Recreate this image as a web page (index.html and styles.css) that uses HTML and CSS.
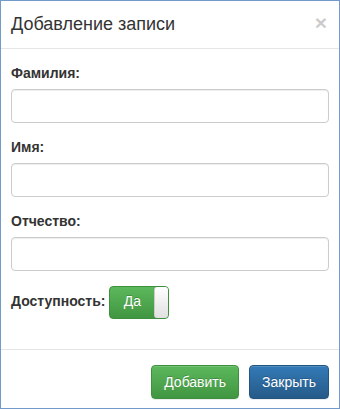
FILE: index.html
```html
<!DOCTYPE html>
<html lang="ru">
<head>
<meta charset="utf-8">
<title>Добавление записи</title>
<link rel="stylesheet" href="styles.css">
</head>
<body>
<div class="modal">
  <div class="modal-header">
    <h4 class="modal-title">Добавление записи</h4>
    <span class="close">×</span>
  </div>
  <div class="modal-body">
    <div class="form-group">
      <label class="label">Фамилия:</label>
      <input class="input" type="text">
    </div>
    <div class="form-group">
      <label class="label">Имя:</label>
      <input class="input" type="text">
    </div>
    <div class="form-group">
      <label class="label">Отчество:</label>
      <input class="input" type="text">
    </div>
    <div class="form-inline">
      <label class="label inline">Доступность:</label>
      <div class="switch">
        <span class="switch-on">Да</span>
        <span class="switch-knob"></span>
      </div>
    </div>
  </div>
  <div class="modal-footer">
    <button class="btn btn-success">Добавить</button>
    <button class="btn btn-primary">Закрыть</button>
  </div>
</div>
</body>
</html>
```

FILE: styles.css
```css
* { box-sizing: border-box; }
html, body { margin: 0; padding: 0; background: #fff; }
body {
  font-family: "Liberation Sans", Arial, sans-serif;
  font-size: 14px;
  line-height: 1.42857;
  color: #333;
}
.modal {
  width: 340px;
  height: 409px;
  border: 1px solid #729bcb;
  overflow: hidden;
  background: #fff;
}
.modal-header {
  display: flex;
  align-items: flex-start;
  justify-content: space-between;
  padding: 10px 10px 11px 10px;
  border-bottom: 1px solid #e5e5e5;
}
.modal-title {
  margin: 0;
  font-size: 18px;
  font-weight: normal;
  line-height: 26px;
  color: #333;
}
.close {
  font-size: 21px;
  font-weight: bold;
  line-height: 1;
  color: #000;
  opacity: 0.2;
  margin-top: 1px;
  margin-right: 2px;
}
.modal-body {
  padding: 15px 10px;
}
.form-group {
  margin-bottom: 15px;
}
.label {
  display: block;
  font-weight: bold;
  margin-bottom: 5px;
}
.label.inline {
  display: inline-block;
  margin: 0 4px 0 0;
}
.input {
  display: block;
  width: 100%;
  height: 34px;
  padding: 6px 12px;
  font-size: 14px;
  color: #555;
  background: #fff;
  border: 1px solid #ccc;
  border-radius: 4px;
  box-shadow: inset 0 1px 1px rgba(0,0,0,0.075);
}
.form-inline {
  display: flex;
  align-items: center;
  margin-bottom: 15px;
}
.switch {
  display: flex;
  width: 60px;
  height: 33px;
  border: 1px solid #3e8f3e;
  border-radius: 4px;
  overflow: hidden;
  background: linear-gradient(#5cb85c, #419641);
}
.switch-on {
  flex: 1;
  display: flex;
  align-items: center;
  justify-content: center;
  color: #fff;
  font-size: 14px;
  text-shadow: 0 -1px 0 rgba(0,0,0,0.2);
}
.switch-knob {
  width: 14px;
  background: linear-gradient(#fff, #e0e0e0);
  border-left: 1px solid #ccc;
  border-radius: 3px 0 0 3px;
}
.modal-footer {
  display: flex;
  justify-content: flex-end;
  gap: 10px;
  padding: 15px 10px;
  border-top: 1px solid #e5e5e5;
}
.btn {
  height: 34px;
  padding: 6px 12px;
  font-family: inherit;
  font-size: 14px;
  line-height: 20px;
  color: #fff;
  border-radius: 4px;
  text-shadow: 0 -1px 0 rgba(0,0,0,0.2);
  box-shadow: inset 0 1px 0 rgba(255,255,255,0.15), 0 1px 1px rgba(0,0,0,0.075);
  cursor: pointer;
}
.btn-success {
  background: linear-gradient(#5cb85c, #419641);
  border: 1px solid #3e8f3e;
}
.btn-primary {
  background: linear-gradient(#337ab7, #265a88);
  border: 1px solid #245580;
}
```
